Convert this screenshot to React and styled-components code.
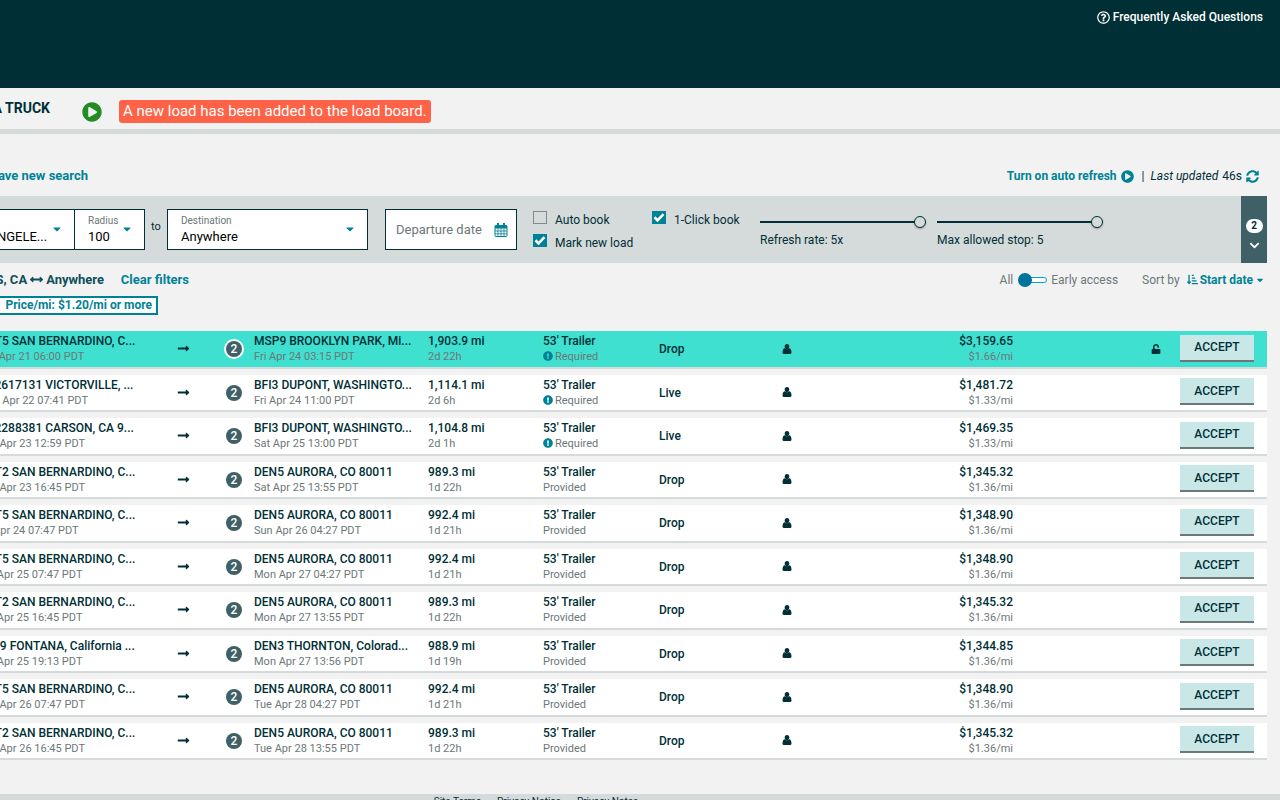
import styled, { createGlobalStyle } from "styled-components";
import {
  FaRegQuestionCircle,
  FaPlayCircle,
  FaSyncAlt,
  FaSortAmountDownAlt,
  FaChevronDown,
  FaCaretDown,
  FaUnlock,
  FaExclamationCircle,
  FaLongArrowAltRight,
  FaArrowsAltH,
} from "react-icons/fa";

const colors = {
  dark: "#002f36",
  slate: "#3f6066",
  teal: "#008296",
  grey: "#6c7778",
  panel: "#d5dbdb",
  page: "#f2f2f2",
  fresh: "#40e0d0",
  accept: "#c9e7e7",
};

const GlobalStyle = createGlobalStyle`
  * {
    box-sizing: border-box;
  }
  body {
    margin: 0;
    background: ${colors.page};
    color: ${colors.dark};
    font-family: Roboto, "Noto Sans", sans-serif;
    font-size: 12px;
    line-height: 16px;
  }
  button, input, select {
    font: inherit;
    color: inherit;
  }
  a {
    color: inherit;
    text-decoration: none;
  }
`;

const Page = styled.div`
  height: 100vh;
  overflow: hidden;
`;

const Header = styled.header`
  display: flex;
  justify-content: flex-end;
  align-items: flex-start;
  height: 88px;
  padding: 9px 17px;
  background: ${colors.dark};
  color: #fff;
`;

const FaqLink = styled.a`
  display: flex;
  align-items: center;
  gap: 3px;
  font-weight: 500;
`;

const SubBar = styled.div`
  display: flex;
  align-items: center;
  height: 46px;
  padding-top: 6px;
  border-bottom: 5px solid ${colors.panel};
`;

/* keeps the right end of its content in view */
const Clip = styled.div`
  display: flex;
  justify-content: flex-end;
  flex: none;
  width: ${(p) => p.$width}px;
  white-space: nowrap;
`;

const TabLink = styled.a`
  padding-bottom: 8px;
  font-size: 14px;
  font-weight: 700;
`;

const PlayButton = styled.button`
  display: flex;
  margin: 0 17px 0 32px;
  padding: 0;
  border: 0;
  background: none;
  color: #228b22;
  font-size: 20px;
`;

const Notice = styled.div`
  padding: 0 4px;
  border-radius: 3px;
  background: #ff6347;
  color: #fff;
  font-size: 15px;
  line-height: 23px;
  white-space: nowrap;
`;

const SearchRow = styled.div`
  display: flex;
  justify-content: space-between;
  align-items: center;
  height: 62px;
  padding: 22px 21px 0 0;
`;

const TextButton = styled.button`
  display: inline-flex;
  align-items: center;
  gap: 4px;
  padding: 0;
  border: 0;
  background: none;
  color: ${colors.teal};
  font-size: ${(p) => (p.$large ? 13 : 12)}px;
  font-weight: 700;
  white-space: nowrap;
`;

const RefreshInfo = styled.div`
  display: flex;
  align-items: center;
  gap: 4px;
  svg {
    font-size: 13px;
  }
`;

const Divider = styled.span`
  margin: 0 2px 0 4px;
`;

const Filters = styled.form`
  display: flex;
  align-items: flex-start;
  height: 67px;
  margin: 0 13px 0 -52px;
  background: ${colors.panel};
`;

const Box = styled.div`
  position: relative;
  flex: none;
  width: ${(p) => p.$width}px;
  height: 41px;
  margin-top: 13px;
  padding: 4px 13px;
  border: 1px solid ${colors.dark};
  border-left-width: ${(p) => (p.$joined ? 0 : 1)}px;
  background: #fff;

  label {
    display: block;
    color: ${colors.grey};
    font-size: 10px;
    line-height: 14px;
  }
  select {
    display: block;
    width: 100%;
    height: 18px;
    padding: 0;
    border: 0;
    background: none;
    appearance: none;
    color: #000;
    font-size: 13px;
    line-height: 18px;
  }
`;

const Caret = styled(FaCaretDown)`
  position: absolute;
  right: 11px;
  top: 13px;
  color: ${colors.teal};
  font-size: 12px;
  pointer-events: none;
`;

const DateBox = styled(Box)`
  display: flex;
  align-items: center;
  margin-left: 17px;
  margin-right: 16px;
  padding: 0 8px 0 10px;

  input {
    flex: 1;
    min-width: 0;
    padding: 0;
    border: 0;
    outline: 0;
    font-size: 13px;
  }
  input::placeholder {
    color: ${colors.grey};
  }
`;

const To = styled.span`
  flex: none;
  width: 22px;
  margin-top: 23px;
  font-size: 11px;
  text-align: center;
`;

const Checks = styled.div`
  display: flex;
  flex: none;
  flex-direction: column;
  gap: 6px;
  width: ${(p) => p.$width}px;
  margin-top: 15px;
`;

const Check = styled.label`
  display: flex;
  align-items: flex-start;
  gap: 8px;
  white-space: nowrap;

  span {
    padding-top: 1px;
  }
  input {
    flex: none;
    width: 14px;
    height: 13px;
    margin: 0;
    border: 1px solid #7d8a8b;
    appearance: none;
  }
  input:checked {
    border-color: ${colors.teal};
    background: ${colors.teal}
      url("data:image/svg+xml,%3Csvg xmlns='http://www.w3.org/2000/svg' viewBox='0 0 12 12'%3E%3Cpath d='M1.500 5.500l3 3 6-6' fill='none' stroke='white' stroke-width='2.600'/%3E%3C/svg%3E")
      center / 12px no-repeat;
  }
`;

const Slider = styled.label`
  display: flex;
  flex-direction: column;
  gap: 4px;
  flex: none;
  width: 166px;
  margin: 19px 11px 0 0;

  input {
    width: 100%;
    height: 13px;
    margin: 0;
    appearance: none;
    background: linear-gradient(${colors.dark}, ${colors.dark}) center / 100% 2px no-repeat;
  }
  input::-webkit-slider-thumb {
    width: 12px;
    height: 12px;
    border: 1px solid ${colors.dark};
    border-radius: 50%;
    appearance: none;
    background: ${colors.panel};
    box-shadow: 0 1px 2px rgba(0, 0, 0, 0.3);
  }
`;

const MoreFilters = styled.button`
  display: flex;
  flex-direction: column;
  align-items: center;
  justify-content: center;
  gap: 7px;
  width: 26px;
  height: 67px;
  margin-left: auto;
  padding: 10px 0 0;
  border: 0;
  background: ${colors.slate};
  color: #fff;

  span {
    width: 17px;
    border-radius: 8px;
    background: #fff;
    color: ${colors.dark};
    font-size: 10px;
    font-weight: 700;
    line-height: 14px;
  }
`;

const Summary = styled.div`
  display: flex;
  align-items: center;
  height: 33px;
  padding-right: 15px;
`;

const Route = styled.strong`
  display: flex;
  align-items: center;
  gap: 3px;
  color: #0f4f5b;
  font-size: 13px;
`;

const SortTools = styled.div`
  display: flex;
  align-items: center;
  gap: 4px;
  margin-left: auto;
  color: ${colors.grey};
`;

const AccessSwitch = styled.input`
  position: relative;
  width: 30px;
  height: 14px;
  margin: 0;
  appearance: none;

  &::before {
    content: "";
    position: absolute;
    inset: 4px 0 4px 8px;
    border: 1px solid #00a1d6;
    border-radius: 4px;
    background: #fff;
  }
  &::after {
    content: "";
    position: absolute;
    left: 1px;
    top: 0;
    width: 14px;
    height: 14px;
    border-radius: 50%;
    background: #00739d;
  }
`;

const SortLabel = styled.span`
  margin: 0 3px 0 20px;
`;

const SortButton = styled(TextButton)`
  gap: 2px;
`;

const Chip = styled.button`
  padding: 0 4px 0 6px;
  border: 2px solid ${colors.teal};
  background: #fff;
  color: ${colors.teal};
  font-weight: 700;
  line-height: 15px;
`;

const Board = styled.div`
  margin: 10px 13px 28px -22px;
`;

const LoadTable = styled.table`
  width: 100%;
  table-layout: fixed;
  border-spacing: 0 6px;
`;

const LoadRow = styled.tr`
  height: 37px;
  &:nth-child(odd) {
    height: 38px;
  }
  td {
    padding: 0;
    border-bottom: 2px solid ${colors.panel};
    background: ${(p) => (p.$fresh ? colors.fresh : "#fff")};
    white-space: nowrap;
  }
`;

const Cell = styled.td`
  text-align: ${(p) => p.$align || "left"};
  > svg {
    display: inline-block;
    margin-bottom: 2px;
    vertical-align: middle;
  }
`;

const Main = styled.div`
  font-weight: 500;
`;

const Sub = styled.div`
  color: ${colors.grey};
  font-size: 11px;

  svg {
    margin-right: 2px;
    color: ${colors.teal};
    vertical-align: -1px;
  }
`;

const Stops = styled.span`
  display: inline-block;
  width: 16px;
  height: 16px;
  border-radius: 50%;
  box-shadow: ${(p) => (p.$fresh ? "0 0 0 2px #fff" : "none")};
  background: ${colors.slate};
  color: #fff;
  font-weight: 500;
  text-align: center;
`;

const AcceptButton = styled.button`
  display: block;
  width: 74px;
  height: 27px;
  margin: 0 0 2px 19px;
  padding: 0;
  border: 0;
  border-bottom: 2px solid #6c7778;
  background: ${colors.accept};
  font-weight: 500;
`;

const Footer = styled.footer`
  display: flex;
  justify-content: center;
  gap: 16px;
  padding: 0 208px 20px 0;
  background: ${colors.panel};
  font-size: 10px;
`;

const columns = [199, 49, 28, 174, 115, 116, 123, 109, null, 148, 106];

const loads = [
  ["ONT5 SAN BERNARDINO, C...", "Tue Apr 21 06:00 PDT", "MSP9 BROOKLYN PARK, Mi...", "Fri Apr 24 03:15 PDT", "1,903.9 mi", "2d 22h", "Required", "Drop", "$3,159.65", "$1.66/mi"],
  ["AN2617131 VICTORVILLE, ...", "Wed Apr 22 07:41 PDT", "BFI3 DUPONT, WASHINGTO...", "Fri Apr 24 11:00 PDT", "1,114.1 mi", "2d 6h", "Required", "Live", "$1,481.72", "$1.33/mi"],
  ["AN2288381 CARSON, CA 9...", "Thu Apr 23 12:59 PDT", "BFI3 DUPONT, WASHINGTO...", "Sat Apr 25 13:00 PDT", "1,104.8 mi", "2d 1h", "Required", "Live", "$1,469.35", "$1.33/mi"],
  ["ONT2 SAN BERNARDINO, C...", "Thu Apr 23 16:45 PDT", "DEN5 AURORA, CO 80011", "Sat Apr 25 13:55 PDT", "989.3 mi", "1d 22h", "Provided", "Drop", "$1,345.32", "$1.36/mi"],
  ["ONT5 SAN BERNARDINO, C...", "Fri Apr 24 07:47 PDT", "DEN5 AURORA, CO 80011", "Sun Apr 26 04:27 PDT", "992.4 mi", "1d 21h", "Provided", "Drop", "$1,348.90", "$1.36/mi"],
  ["ONT5 SAN BERNARDINO, C...", "Sat Apr 25 07:47 PDT", "DEN5 AURORA, CO 80011", "Mon Apr 27 04:27 PDT", "992.4 mi", "1d 21h", "Provided", "Drop", "$1,348.90", "$1.36/mi"],
  ["ONT2 SAN BERNARDINO, C...", "Sat Apr 25 16:45 PDT", "DEN5 AURORA, CO 80011", "Mon Apr 27 13:55 PDT", "989.3 mi", "1d 22h", "Provided", "Drop", "$1,345.32", "$1.36/mi"],
  ["LGB9 FONTANA, California ...", "Sat Apr 25 19:13 PDT", "DEN3 THORNTON, Colorad...", "Mon Apr 27 13:56 PDT", "988.9 mi", "1d 19h", "Provided", "Drop", "$1,344.85", "$1.36/mi"],
  ["ONT5 SAN BERNARDINO, C...", "Sun Apr 26 07:47 PDT", "DEN5 AURORA, CO 80011", "Tue Apr 28 04:27 PDT", "992.4 mi", "1d 21h", "Provided", "Drop", "$1,348.90", "$1.36/mi"],
  ["ONT2 SAN BERNARDINO, C...", "Sun Apr 26 16:45 PDT", "DEN5 AURORA, CO 80011", "Tue Apr 28 13:55 PDT", "989.3 mi", "1d 22h", "Provided", "Drop", "$1,345.32", "$1.36/mi"],
];

function CalendarIcon() {
  return (
    <svg width="14" height="14" viewBox="0 0 14 14" fill="none" stroke={colors.teal}>
      <rect x="1" y="2.5" width="12" height="11" rx="1" />
      <path d="M1 4h12" strokeWidth="3" />
      <path d="M4 0v4M10 0v4" strokeWidth="2" />
      <path d="M4 5v8M7 5v8M10 5v8M1 8h12M1 10.800h12" strokeWidth="0.800" />
    </svg>
  );
}

function DriverIcon() {
  return (
    <svg width="10" height="10" viewBox="0 0 10 10" fill={colors.dark}>
      <ellipse cx="5" cy="2.600" rx="2.300" ry="2.600" />
      <path d="M2.800 4.300Q.6 4.600.5 8.400.5 10 2 10h6q1.500 0 1.500-1.600Q9.400 4.600 7.200 4.300 5 6.300 2.800 4.300z" />
    </svg>
  );
}

function Load({ load, fresh }) {
  const [from, leaves, stop, arrives, miles, time, trailer, mode, price, rate] = load;
  return (
    <LoadRow $fresh={fresh}>
      <Cell>
        <Main>{from}</Main>
        <Sub>{leaves}</Sub>
      </Cell>
      <Cell><FaLongArrowAltRight size={13} /></Cell>
      <Cell><Stops $fresh={fresh}>2</Stops></Cell>
      <Cell>
        <Main>{stop}</Main>
        <Sub>{arrives}</Sub>
      </Cell>
      <Cell>
        <Main>{miles}</Main>
        <Sub>{time}</Sub>
      </Cell>
      <Cell>
        <Main>53' Trailer</Main>
        <Sub>
          {trailer === "Required" && <FaExclamationCircle size={10} />}
          {trailer}
        </Sub>
      </Cell>
      <Cell><Main>{mode}</Main></Cell>
      <Cell><DriverIcon /></Cell>
      <Cell $align="right">
        <Main>{price}</Main>
        <Sub>{rate}</Sub>
      </Cell>
      <Cell $align="right">{fresh && <FaUnlock size={10} />}</Cell>
      <Cell><AcceptButton type="button">ACCEPT</AcceptButton></Cell>
    </LoadRow>
  );
}

export default function App() {
  return (
    <Page>
      <GlobalStyle />
      <Header>
        <FaqLink href="#faq">
          <FaRegQuestionCircle size={13} />
          Frequently Asked Questions
        </FaqLink>
      </Header>

      <SubBar>
        <Clip $width={50}>
          <TabLink href="#post">POST A TRUCK</TabLink>
        </Clip>
        <PlayButton aria-label="Start"><FaPlayCircle /></PlayButton>
        <Notice role="status">A new load has been added to the load board.</Notice>
      </SubBar>

      <SearchRow>
        <Clip $width={88}>
          <TextButton $large>Save new search</TextButton>
        </Clip>
        <RefreshInfo>
          <TextButton>Turn on auto refresh <FaPlayCircle /></TextButton>
          <Divider>|</Divider>
          <em>Last updated</em>
          <span>46s</span>
          <TextButton aria-label="Refresh"><FaSyncAlt /></TextButton>
        </RefreshInfo>
      </SearchRow>

      <Filters>
        <Box $width={127}>
          <label htmlFor="origin">Origin</label>
          <select id="origin"><option>LOS ANGELE...</option></select>
          <Caret />
        </Box>
        <Box $width={70} $joined>
          <label htmlFor="radius">Radius</label>
          <select id="radius"><option>100</option></select>
          <Caret />
        </Box>
        <To>to</To>
        <Box $width={201}>
          <label htmlFor="destination">Destination</label>
          <select id="destination"><option>Anywhere</option></select>
          <Caret />
        </Box>
        <DateBox $width={132}>
          <input aria-label="Departure date" placeholder="Departure date" />
          <CalendarIcon />
        </DateBox>
        <Checks $width={119}>
          <Check><input type="checkbox" /><span>Auto book</span></Check>
          <Check><input type="checkbox" defaultChecked /><span>Mark new load</span></Check>
        </Checks>
        <Checks $width={108}>
          <Check><input type="checkbox" defaultChecked /><span>1-Click book</span></Check>
        </Checks>
        <Slider>
          <input type="range" min="1" max="5" defaultValue="5" />
          Refresh rate: 5x
        </Slider>
        <Slider>
          <input type="range" min="0" max="5" defaultValue="5" />
          Max allowed stop: 5
        </Slider>
        <MoreFilters type="button" aria-label="More filters">
          <span>2</span>
          <FaChevronDown size={11} />
        </MoreFilters>
      </Filters>

      <Summary>
        <Clip $width={104}>
          <Route>LOS ANGELES, CA <FaArrowsAltH size={13} /> Anywhere</Route>
        </Clip>
        <Clip $width={85}>
          <TextButton $large>Clear filters</TextButton>
        </Clip>
        <SortTools>
          <span>All</span>
          <AccessSwitch type="checkbox" role="switch" aria-label="Early access" />
          <span>Early access</span>
          <SortLabel>Sort by</SortLabel>
          <SortButton><FaSortAmountDownAlt size={11} />Start date<FaCaretDown size={10} /></SortButton>
        </SortTools>
      </Summary>
      <Clip $width={158}>
        <Chip>Price/mi: $1.20/mi or more</Chip>
      </Clip>

      <Board>
        <LoadTable>
          <colgroup>
            {columns.map((width, i) => <col key={i} width={width || undefined} />)}
          </colgroup>
          <tbody>
            {loads.map((load, i) => <Load key={i} load={load} fresh={i === 0} />)}
          </tbody>
        </LoadTable>
      </Board>

      <Footer>
        <a href="#terms">Site Terms</a>
        <a href="#notice">Privacy Notice</a>
        <a href="#notes">Privacy Notes</a>
      </Footer>
    </Page>
  );
}
